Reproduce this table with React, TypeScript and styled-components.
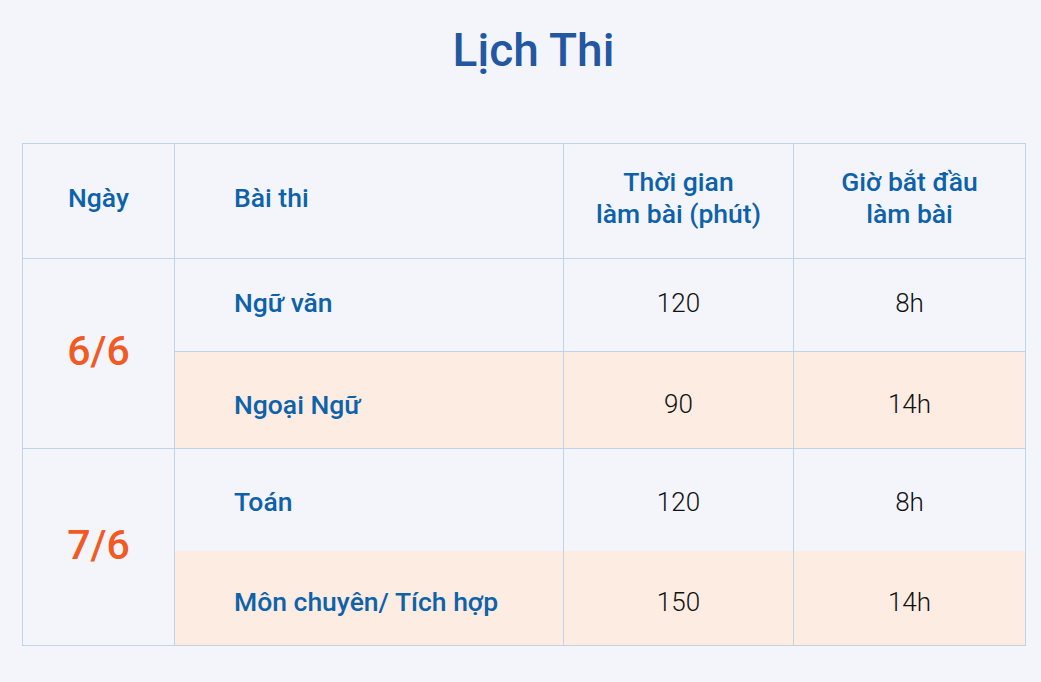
import React from "react";
import styled, { createGlobalStyle } from "styled-components";

const GlobalStyle = createGlobalStyle`
  html, body {
    margin: 0;
    padding: 0;
    background: #f3f5fa;
    font-family: Roboto, "Liberation Sans", sans-serif;
  }
`;

const Page = styled.div`
  width: 1041px;
  height: 682px;
  padding: 23px 16px 0 22px;
  box-sizing: border-box;
`;

const Title = styled.h1`
  margin: 0 0 66px;
  padding-left: 20px;
  text-align: center;
  font-size: 46px;
  line-height: 54px;
  font-weight: 500;
  color: #2357a2;
`;

const Table = styled.table`
  width: 1003px;
  border-collapse: collapse;
  table-layout: fixed;
  border: 1px solid #bfd3ea;
  border-bottom-color: #c5d2df;
`;

const HeadRow = styled.tr`
  height: 115px;
`;

const HeadCell = styled.th<{ $align?: "left" | "center" }>`
  padding: 0 0 7px;
  padding-left: ${(p) => (p.$align === "left" ? "59px" : "0")};
  text-align: ${(p) => p.$align ?? "center"};
  vertical-align: middle;
  font-size: 26.5px;
  line-height: 32px;
  font-weight: 500;
  color: #0d62aa;
  border: 1px solid #bfd3ea;
`;

const Row = styled.tr<{ $height: number; $shaded?: boolean; $noTop?: boolean }>`
  height: ${(p) => p.$height}px;
  background: ${(p) => (p.$shaded ? "#fdece1" : "transparent")};
  td {
    border-top: ${(p) => (p.$noTop ? "none" : "1px solid #bfd3ea")};
  }
`;

const DateCell = styled.td`
  background: #f3f5fa;
  padding-bottom: 6px;
  text-align: center;
  vertical-align: middle;
  font-size: 41px;
  font-weight: 500;
  color: #f15a24;
  border: 1px solid #bfd3ea;
`;

// positive offset pushes text down, negative pulls it up
const SubjectCell = styled.td<{ $offset: number }>`
  padding: ${(p) => Math.max(p.$offset, 0)}px 0 ${(p) => Math.max(-p.$offset, 0)}px 59px;
  vertical-align: middle;
  font-size: 26.5px;
  font-weight: 500;
  color: #0d62aa;
  border-left: 1px solid #bfd3ea;
  border-right: 1px solid #bfd3ea;
`;

const ValueCell = styled.td<{ $offset: number }>`
  padding: ${(p) => Math.max(p.$offset, 0)}px 0 ${(p) => Math.max(-p.$offset, 0)}px;
  text-align: center;
  vertical-align: middle;
  font-size: 26px;
  font-weight: 300;
  color: #111;
  border-left: 1px solid #bfd3ea;
  border-right: 1px solid #bfd3ea;
`;

type Exam = { subject: string; minutes: number; start: string; height: number; offset: number };

const days: { date: string; exams: Exam[] }[] = [
  {
    date: "6/6",
    exams: [
      { subject: "Ngữ văn", minutes: 120, start: "8h", height: 93, offset: -5 },
      { subject: "Ngoại Ngữ", minutes: 90, start: "14h", height: 97, offset: 8 },
    ],
  },
  {
    date: "7/6",
    exams: [
      { subject: "Toán", minutes: 120, start: "8h", height: 102, offset: 4 },
      { subject: "Môn chuyên/ Tích hợp", minutes: 150, start: "14h", height: 95, offset: 8 },
    ],
  },
];

const App: React.FC = () => {
  return (
    <Page>
      <GlobalStyle />
      <Title>Lịch Thi</Title>
      <Table>
        <colgroup>
          <col style={{ width: 152 }} />
          <col style={{ width: 389 }} />
          <col style={{ width: 230 }} />
          <col style={{ width: 232 }} />
        </colgroup>
        <thead>
          <HeadRow>
            <HeadCell>Ngày</HeadCell>
            <HeadCell $align="left">Bài thi</HeadCell>
            <HeadCell>
              Thời gian
              <br />
              làm bài (phút)
            </HeadCell>
            <HeadCell>
              Giờ bắt đầu
              <br />
              làm bài
            </HeadCell>
          </HeadRow>
        </thead>
        <tbody>
          {days.map((day, di) =>
            day.exams.map((exam, i) => (
              <Row
                key={`${di}-${i}`}
                $height={exam.height}
                $shaded={i === 1}
                $noTop={di === 1 && i === 1}
              >
                {i === 0 && <DateCell rowSpan={day.exams.length}>{day.date}</DateCell>}
                <SubjectCell $offset={exam.offset}>{exam.subject}</SubjectCell>
                <ValueCell $offset={exam.offset}>{exam.minutes}</ValueCell>
                <ValueCell $offset={exam.offset}>{exam.start}</ValueCell>
              </Row>
            ))
          )}
        </tbody>
      </Table>
    </Page>
  );
};

export default App;
